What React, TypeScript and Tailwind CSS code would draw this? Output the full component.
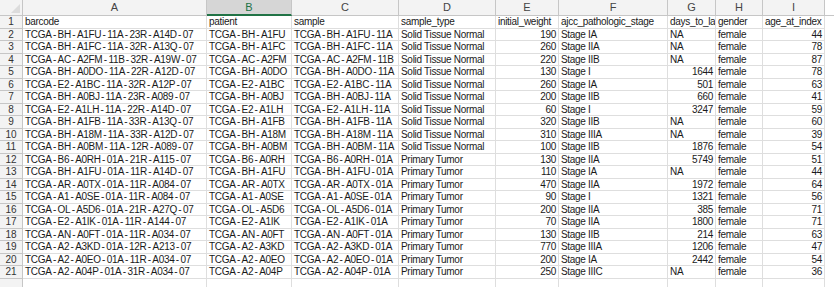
const cols = ["A", "B", "C", "D", "E", "F", "G", "H", "I"]

const rows: [string, string, string, string, string, string, string, string, string][] = [
  ["TCGA-BH-A1FU-11A-23R-A14D-07", "TCGA-BH-A1FU", "TCGA-BH-A1FU-11A", "Solid Tissue Normal", "190", "Stage IA", "NA", "female", "44"],
  ["TCGA-BH-A1FC-11A-32R-A13Q-07", "TCGA-BH-A1FC", "TCGA-BH-A1FC-11A", "Solid Tissue Normal", "260", "Stage IIA", "NA", "female", "78"],
  ["TCGA-AC-A2FM-11B-32R-A19W-07", "TCGA-AC-A2FM", "TCGA-AC-A2FM-11B", "Solid Tissue Normal", "220", "Stage IIB", "NA", "female", "87"],
  ["TCGA-BH-A0DO-11A-22R-A12D-07", "TCGA-BH-A0DO", "TCGA-BH-A0DO-11A", "Solid Tissue Normal", "130", "Stage I", "1644", "female", "78"],
  ["TCGA-E2-A1BC-11A-32R-A12P-07", "TCGA-E2-A1BC", "TCGA-E2-A1BC-11A", "Solid Tissue Normal", "260", "Stage IA", "501", "female", "63"],
  ["TCGA-BH-A0BJ-11A-23R-A089-07", "TCGA-BH-A0BJ", "TCGA-BH-A0BJ-11A", "Solid Tissue Normal", "200", "Stage IIB", "660", "female", "41"],
  ["TCGA-E2-A1LH-11A-22R-A14D-07", "TCGA-E2-A1LH", "TCGA-E2-A1LH-11A", "Solid Tissue Normal", "60", "Stage I", "3247", "female", "59"],
  ["TCGA-BH-A1FB-11A-33R-A13Q-07", "TCGA-BH-A1FB", "TCGA-BH-A1FB-11A", "Solid Tissue Normal", "320", "Stage IIB", "NA", "female", "60"],
  ["TCGA-BH-A18M-11A-33R-A12D-07", "TCGA-BH-A18M", "TCGA-BH-A18M-11A", "Solid Tissue Normal", "310", "Stage IIIA", "NA", "female", "39"],
  ["TCGA-BH-A0BM-11A-12R-A089-07", "TCGA-BH-A0BM", "TCGA-BH-A0BM-11A", "Solid Tissue Normal", "100", "Stage IIB", "1876", "female", "54"],
  ["TCGA-B6-A0RH-01A-21R-A115-07", "TCGA-B6-A0RH", "TCGA-B6-A0RH-01A", "Primary Tumor", "130", "Stage IIA", "5749", "female", "51"],
  ["TCGA-BH-A1FU-01A-11R-A14D-07", "TCGA-BH-A1FU", "TCGA-BH-A1FU-01A", "Primary Tumor", "110", "Stage IA", "NA", "female", "44"],
  ["TCGA-AR-A0TX-01A-11R-A084-07", "TCGA-AR-A0TX", "TCGA-AR-A0TX-01A", "Primary Tumor", "470", "Stage IIA", "1972", "female", "64"],
  ["TCGA-A1-A0SE-01A-11R-A084-07", "TCGA-A1-A0SE", "TCGA-A1-A0SE-01A", "Primary Tumor", "90", "Stage I", "1321", "female", "56"],
  ["TCGA-OL-A5D6-01A-21R-A27Q-07", "TCGA-OL-A5D6", "TCGA-OL-A5D6-01A", "Primary Tumor", "200", "Stage IIA", "385", "female", "71"],
  ["TCGA-E2-A1IK-01A-11R-A144-07", "TCGA-E2-A1IK", "TCGA-E2-A1IK-01A", "Primary Tumor", "70", "Stage IIA", "1800", "female", "71"],
  ["TCGA-AN-A0FT-01A-11R-A034-07", "TCGA-AN-A0FT", "TCGA-AN-A0FT-01A", "Primary Tumor", "130", "Stage IIB", "214", "female", "63"],
  ["TCGA-A2-A3KD-01A-12R-A213-07", "TCGA-A2-A3KD", "TCGA-A2-A3KD-01A", "Primary Tumor", "770", "Stage IIIA", "1206", "female", "47"],
  ["TCGA-A2-A0EO-01A-11R-A034-07", "TCGA-A2-A0EO", "TCGA-A2-A0EO-01A", "Primary Tumor", "200", "Stage IA", "2442", "female", "54"],
  ["TCGA-A2-A04P-01A-31R-A034-07", "TCGA-A2-A04P", "TCGA-A2-A04P-01A", "Primary Tumor", "250", "Stage IIIC", "NA", "female", "36"],
]

const headers = ["barcode", "patient", "sample", "sample_type", "initial_weight", "ajcc_pathologic_stage", "days_to_last_follow_up", "gender", "age_at_index"]

const grid = "grid grid-cols-[23px_184px_85px_107px_97px_63px_109px_48px_47px_62px_1fr]"
const cell = "h-[12.5px] border-r border-b border-[#dedede] overflow-hidden whitespace-nowrap px-[2px] leading-[12px] text-[10px] tracking-[-0.3px] text-[#1a1a1a]"
const rowHead = "h-[12.5px] border-r border-b border-[#c6c6c6] bg-[#f3f3f3] text-center text-[10px] leading-[12px] text-[#333]"

function isNum(v: string) {
  return /^\d+$/.test(v)
}

// the sheet's font draws hyphens with air on both sides
function Value({ v }: { v: string }) {
  if (!v.includes("-")) return <>{v}</>
  const parts = v.split("-")
  return (
    <>
      {parts.map((p, k) => (
        <span key={k}>
          {k > 0 && <span className="inline-block w-[6px] text-center tracking-normal">-</span>}
          {p}
        </span>
      ))}
    </>
  )
}

export default function App() {
  return (
    <div className="w-[834px] h-[287px] overflow-hidden bg-white" style={{ fontFamily: "'Liberation Sans', Arial, sans-serif" }}>
      <div className={grid}>
        <div className="relative h-[16px] border-r border-b border-[#c6c6c6] bg-[#f3f3f3]">
          <div className="absolute right-[2px] bottom-[2px] w-0 h-0 border-l-[9px] border-l-transparent border-b-[9px] border-b-[#dcdcdc]" />
        </div>
        {cols.map((c) => (
          <div
            key={c}
            className={
              c === "B"
                ? "h-[16px] border-r border-[#c6c6c6] border-b-2 border-b-[#217346] bg-[#d6d6d6] text-center text-[11px] leading-[15px] text-[#217346]"
                : "h-[16px] border-r border-b border-[#c6c6c6] bg-[#f3f3f3] text-center text-[11px] leading-[15px] text-[#444]"
            }
          >
            {c}
          </div>
        ))}
        <div className="h-[16px] border-b border-[#c6c6c6] bg-white" />

        <div className={rowHead}>1</div>
        {headers.map((h) => (
          <div key={h} className={cell}>
            {h}
          </div>
        ))}
        <div className="h-[12.5px]" />

        {rows.map((r, i) => (
          <>
            <div key={"n" + i} className={rowHead}>
              {i + 2}
            </div>
            {r.map((v, j) => (
              <div key={i + "-" + j} className={isNum(v) ? cell + " text-right" : cell}>
                <Value v={v} />
              </div>
            ))}
            <div key={"e" + i} className="h-[12.5px]" />
          </>
        ))}

        <div className="h-[12px] border-r border-[#c6c6c6] bg-[#f3f3f3]" />
        {cols.map((c) => (
          <div key={"x" + c} className="h-[12px] border-r border-[#dedede]" />
        ))}
        <div />
      </div>
    </div>
  )
}
